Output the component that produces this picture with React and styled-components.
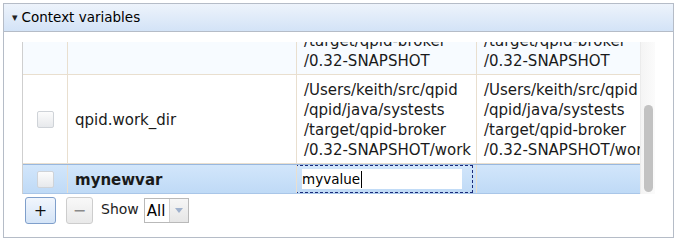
import React, { useLayoutEffect, useRef } from 'react';
import styled, { createGlobalStyle } from 'styled-components';

const vars = [
  { name: 'qpid.amqp_port', value: ['5672'], effective: ['5672'] },
  {
    name: 'qpid.home_dir',
    value: ['/Users/keith/src/qpid', '/qpid/java/systests', '/target/qpid-broker', '/0.32-SNAPSHOT'],
    effective: ['/Users/keith/src/qpid', '/qpid/java/systests', '/target/qpid-broker', '/0.32-SNAPSHOT'],
  },
  {
    name: 'qpid.work_dir',
    value: ['/Users/keith/src/qpid', '/qpid/java/systests', '/target/qpid-broker', '/0.32-SNAPSHOT/work'],
    effective: ['/Users/keith/src/qpid', '/qpid/java/systests', '/target/qpid-broker', '/0.32-SNAPSHOT/work'],
  },
];

const App = () => {
  const viewRef = useRef(null);

  // grid is scrolled down to the newly added row
  useLayoutEffect(() => {
    const el = viewRef.current;
    if (el) el.scrollTop = el.scrollHeight;
  }, []);

  return (
    <Page>
      <GlobalStyle />
      <Panel>
        <TitleBar>
          <Arrow>▾</Arrow>
          Context variables
        </TitleBar>
        <Body>
          <Grid>
            <Viewport ref={viewRef}>
              {vars.map((v, i) => (
                <Row key={v.name} $odd={i % 2 === 1}>
                  <CheckCell><Checkbox /></CheckCell>
                  <NameCell>{v.name}</NameCell>
                  <TextCell>
                    {v.value.map(line => <Line key={line}>{line}</Line>)}
                  </TextCell>
                  <TextCell $last>
                    {v.effective.map(line => <Line key={line}>{line}</Line>)}
                  </TextCell>
                </Row>
              ))}
              <Row $selected>
                <CheckCell><Checkbox /></CheckCell>
                <NameCell $bold>mynewvar</NameCell>
                <EditCell>
                  <FocusBox>
                    <ValueInput>myvalue<Caret /></ValueInput>
                  </FocusBox>
                </EditCell>
                <TextCell $last />
              </Row>
            </Viewport>
            <ScrollTrack>
              <ScrollThumb />
            </ScrollTrack>
          </Grid>
          <Toolbar>
            <ToolButton $primary>+</ToolButton>
            <ToolButton $disabled>−</ToolButton>
            <ShowLabel>Show</ShowLabel>
            <Select>
              <SelectValue>All</SelectValue>
              <SelectArrow>
                <svg width="8" height="5" viewBox="0 0 8 5">
                  <path d="M0 0 L8 0 L4 5 Z" fill="#9fb1cc" />
                </svg>
              </SelectArrow>
            </Select>
          </Toolbar>
        </Body>
      </Panel>
    </Page>
  );
};

export default App;

// ***********************************************************************************
// Styled Components
// ***********************************************************************************

const GlobalStyle = createGlobalStyle`
  body {
    margin: 0;
    background: #fff;
    font-family: "DejaVu Sans", "Liberation Sans", sans-serif;
    color: #1a1a1a;
  }
`;

const Page = styled.div`
  padding: 3px 5px 0 3px;
`;

const Panel = styled.div`
  width: 671px;
`;

const TitleBar = styled.div`
  display: flex;
  align-items: center;
  height: 27px;
  border: 1px solid #b5bcc7;
  background: linear-gradient(#edf3fb, #d3e3f7);
  padding-left: 8px;
  padding-bottom: 1px;
  box-sizing: border-box;
  height: 29px;
  font-size: 13.5px;
  color: #000;
`;

const Arrow = styled.span`
  font-size: 11px;
  margin-right: 4px;
  color: #222;
`;

const Body = styled.div`
  border: 1px solid #b5bcc7;
  border-top: none;
  padding: 10px 18px 13px 18px;
`;

const Grid = styled.div`
  display: flex;
  height: 152px;
  border-left: 1px solid #cfcfcf;
`;

const Viewport = styled.div`
  flex: 1;
  overflow: hidden;
`;

const ScrollTrack = styled.div`
  position: relative;
  width: 14px;
  border-left: 1px solid #ebebeb;
  background: linear-gradient(90deg, #f4f4f4, #fbfbfb);
`;

const ScrollThumb = styled.div`
  position: absolute;
  top: 63px;
  bottom: 2px;
  left: 3px;
  right: 2px;
  border-radius: 5px;
  background: #c2c2c2;
`;

const Row = styled.div`
  display: grid;
  grid-template-columns: 45px 229px 180px 163px;
  border-bottom: 1px solid ${({ $selected }) => ($selected ? '#a9c6e8' : '#e9dfcf')};
  border-top: ${({ $selected }) => ($selected ? '1px solid #98b7de' : 'none')};
  background: ${({ $selected, $odd }) =>
    $selected ? 'linear-gradient(#d2e6fb, #bfdaf6)' : $odd ? '#f7fbff' : '#fff'};
`;

const Cell = styled.div`
  border-right: 1px solid #e9dfcf;
  padding: 5px 0 3px 7px;
  font-size: 15px;
  line-height: 20px;
  overflow: hidden;
`;

const CheckCell = styled(Cell)`
  display: flex;
  align-items: center;
  justify-content: center;
  padding: 0;
`;

const Checkbox = styled.div`
  width: 15px;
  height: 15px;
  border: 1px solid #cfd3d8;
  border-radius: 2px;
  background: linear-gradient(#fcfcfc, #e7e9ec);
`;

const NameCell = styled(Cell)`
  display: flex;
  align-items: center;
  font-weight: ${({ $bold }) => ($bold ? 'bold' : 'normal')};
`;

const TextCell = styled(Cell)`
  border-right: ${({ $last }) => ($last ? 'none' : '1px solid #e9dfcf')};
`;

const Line = styled.div`
  white-space: nowrap;
`;

const EditCell = styled(Cell)`
  padding: 0;
  display: flex;
  align-items: stretch;
`;

const FocusBox = styled.div`
  width: 170px;
  margin-left: -2px;
  border: 1px dashed #1b2a7a;
  display: flex;
  align-items: center;
  padding-left: 6px;
`;

const ValueInput = styled.div`
  display: flex;
  align-items: center;
  width: 160px;
  height: 20px;
  background: #fff;
  font-size: 13.5px;
  color: #000;
`;

const Caret = styled.span`
  display: inline-block;
  width: 1px;
  height: 17px;
  background: #000;
  margin-left: 1px;
`;

const Toolbar = styled.div`
  display: flex;
  align-items: center;
  margin-top: 3px;
  padding-left: 3px;
`;

const ToolButton = styled.div`
  display: flex;
  align-items: center;
  justify-content: center;
  width: ${({ $primary }) => ($primary ? '29px' : '25px')};
  height: 25px;
  margin-right: ${({ $primary }) => ($primary ? '10px' : '8px')};
  border: 1px solid ${({ $primary }) => ($primary ? '#7f9fcb' : '#cdcdcd')};
  border-radius: 3px;
  background: ${({ $primary }) =>
    $primary ? 'linear-gradient(#f1f6fd, #d4e4f7)' : 'linear-gradient(#f8f8f8, #e9e9e9)'};
  color: ${({ $disabled }) => ($disabled ? '#8a8a8a' : '#111')};
  font-size: 16px;
`;

const ShowLabel = styled.span`
  font-size: 14px;
  color: #222;
  margin-right: 5px;
  margin-top: -4px;
`;

const Select = styled.div`
  display: flex;
  height: 23px;
  border: 1px solid #b9b9b9;
`;

const SelectValue = styled.div`
  display: flex;
  align-items: center;
  padding: 0 2px;
  width: 20px;
  background: #fff;
  font-size: 15px;
  color: #000;
`;

const SelectArrow = styled.div`
  display: flex;
  align-items: center;
  justify-content: center;
  width: 18px;
  border-left: 1px solid #cfcfcf;
  background: linear-gradient(#f6f6f6, #e6e6e6);
`;
